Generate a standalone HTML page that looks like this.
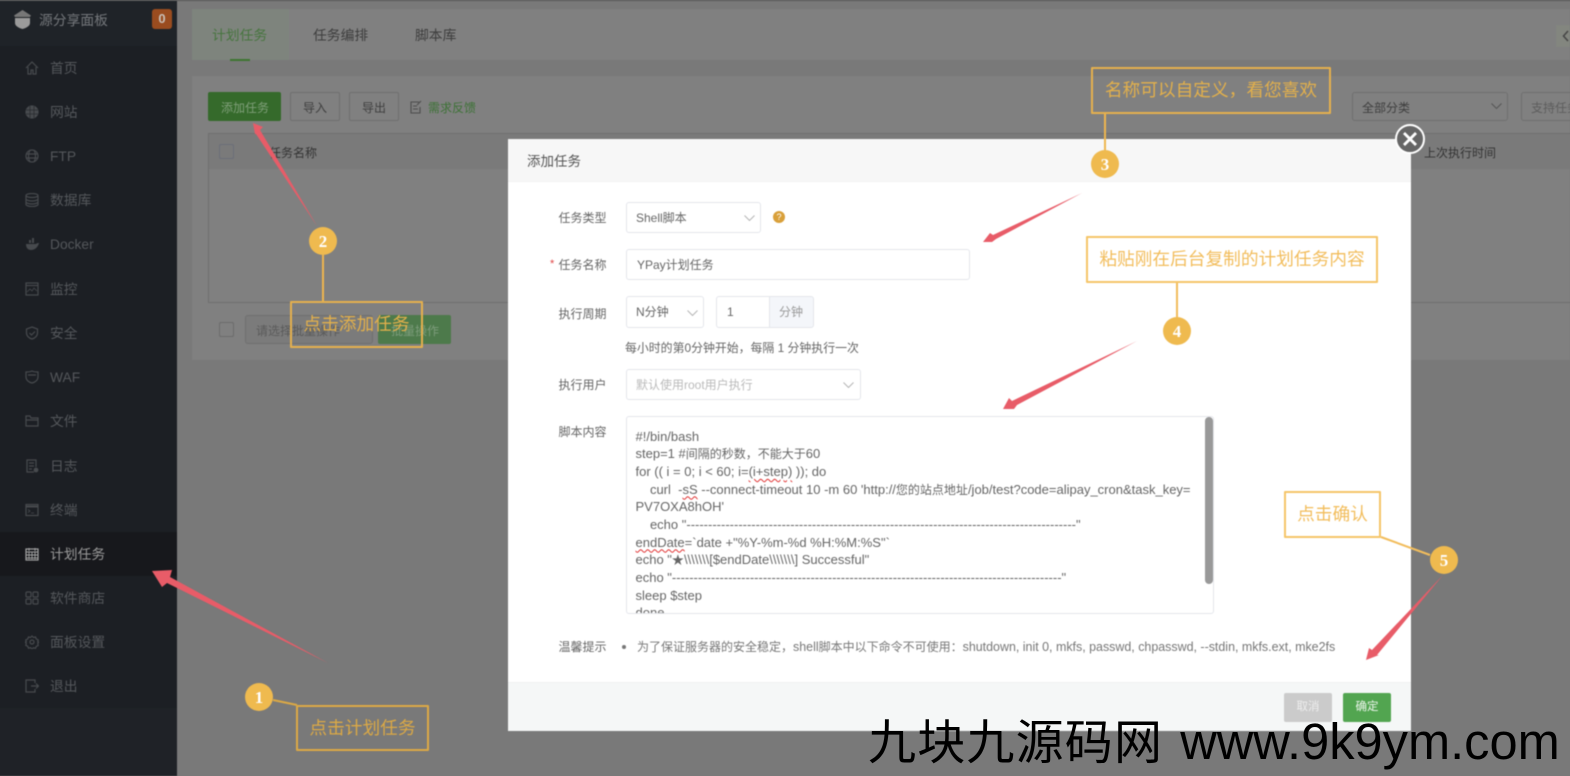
<!DOCTYPE html>
<html lang="zh-CN"><head><meta charset="utf-8"><title>计划任务</title>
<style>
html,body{margin:0;padding:0;width:1570px;height:776px;overflow:hidden;background:#797979}
body{font-family:"Liberation Sans","Noto Sans CJK SC",sans-serif;position:relative}
#page{position:absolute;left:0;top:0;width:1570px;height:776px;filter:blur(.55px);transform:translateX(1px)}
.a{position:absolute;box-sizing:border-box}
.t{position:absolute;white-space:pre;line-height:20px;height:20px;margin-top:-9px}
.nav{color:#54575b;font-size:13.8px;left:49px;margin-top:-8px}
.ic{position:absolute;left:24px;width:14px;height:14px;margin-top:-6px;fill:none;stroke:#474a4e;stroke-width:1.2}
.box{position:absolute;box-sizing:border-box;border:1px solid #e4e6eb;border-radius:3px;background:#fff}
.lb{color:#666;font-size:12px;left:557.5px}
.in{color:#666;font-size:12px}
.sl{position:absolute;width:11px;height:6px;fill:none;stroke:#b5b5b5;stroke-width:1}
.code{position:absolute;color:#666;font-size:13px;line-height:17.67px;white-space:pre}
.code i,.tip i{font-style:normal;font-size:12px;line-height:0}
.squig{text-decoration:underline wavy #e03030 1px;text-underline-offset:2px}
.co{position:absolute;box-sizing:border-box;border:2px solid #e5b04d;border-radius:1px;font-size:17.7px;text-align:center;color:#e3b04b}
.co2{border-color:#f5c568;color:#f2bd5c}
svg.ov{position:absolute;left:0;top:0}
.wm{position:absolute;left:868px;top:703px;height:70px;line-height:70px;white-space:nowrap;color:#000}
</style></head><body>
<div id="page">
<!-- sidebar -->
<div class="a" style="left:-2px;top:0;width:178px;height:776px;background:#1f2227"></div>
<div class="a" style="left:-2px;top:1px;width:178px;height:45px;background:#1f2328"></div>
<div class="a" style="left:-2px;top:46px;width:178px;height:662px;background:#1c1f24"></div>
<div class="a" style="left:-2px;top:532px;width:178px;height:44px;background:#17181c"></div>
<div class="a" style="left:-2px;top:0;width:1574px;height:1px;background:#555"></div>
<svg class="a" style="left:12px;top:9px" width="19" height="21" viewBox="0 0 19 21"><path d="M2 9h15v5c0 3-4 5-7.500 6C6 19 2 17 2 14z" fill="#9b9b9b"/><path d="M1 6.500 9.500 1 18 6.500 17 8H2z" fill="#777"/></svg>
<div class="t" style="left:38px;top:20px;color:#74777b;font-size:13.8px">源分享面板</div>
<div class="a" style="left:151px;top:9px;width:20px;height:20px;border-radius:3px;background:#9a4c1f;color:#c9c0b8;font-size:13px;font-weight:bold;text-align:center;line-height:20px">0</div>

<svg class="ic" style="top:67px" viewBox="0 0 14 14"><path d="M1 7 7 1l6 6M3 6v7h3V9h2v4h3V6"/></svg><div class="t nav" style="top:67px">首页</div>
<svg class="ic" style="top:111px" viewBox="0 0 14 14"><circle cx="7" cy="7" r="6" fill="#474a4e"/><path d="M1 5h12M1 9h12M5 1v12M9 1v12" stroke="#2a2c30" stroke-width=".8"/></svg><div class="t nav" style="top:111px">网站</div>
<svg class="ic" style="top:155px" viewBox="0 0 14 14"><circle cx="7" cy="7" r="6"/><path d="M1 5h12M1 9h12M5 1c-2 4-2 8 0 12M9 1c2 4 2 8 0 12"/></svg><div class="t nav" style="top:155px">FTP</div>
<svg class="ic" style="top:199px" viewBox="0 0 14 14"><ellipse cx="7" cy="2.500" rx="6" ry="2"/><path d="M1 2.500v9c0 1 3 2 6 2s6-1 6-2v-9M1 6c0 1 3 2 6 2s6-1 6-2M1 9c0 1 3 2 6 2s6-1 6-2"/></svg><div class="t nav" style="top:199px">数据库</div>
<svg class="ic" style="top:243px" viewBox="0 0 14 14"><path d="M1 7h10c1-1 2-1 3-1-1 4-4 7-8 7-3 0-5-2-5-6zM4 3h2v3H4zM7 1h2v5H7z" fill="#474a4e" stroke="none"/></svg><div class="t nav" style="top:243px">Docker</div>
<svg class="ic" style="top:288px" viewBox="0 0 14 14"><rect x="1" y="1" width="12" height="12"/><path d="M2 10l3-3 2 2 2-3 3 3" stroke-width=".8"/><path d="M1 3.500h12"/></svg><div class="t nav" style="top:288px">监控</div>
<svg class="ic" style="top:332px" viewBox="0 0 14 14"><path d="M7 1l5.500 2v4c0 3-3 5.500-5.500 6-2.500-.5-5.500-3-5.500-6V3zM4.500 7 6.500 9l3.500-3.500"/></svg><div class="t nav" style="top:332px">安全</div>
<svg class="ic" style="top:376px" viewBox="0 0 14 14"><path d="M7 1c2 1 4 1 6 1v5c0 3-3 5.500-6 6-3-.5-6-3-6-6V2c2 0 4 0 6-1zM3 5h8"/></svg><div class="t nav" style="top:376px">WAF</div>
<svg class="ic" style="top:420px" viewBox="0 0 14 14"><path d="M1 12V2h4l1 2h7v8zM1 6h12"/></svg><div class="t nav" style="top:420px">文件</div>
<svg class="ic" style="top:465px" viewBox="0 0 14 14"><path d="M11 8V1H2v12h7M4 4h5M4 7h5M4 10h3"/><circle cx="11" cy="11" r="1.800" fill="#474a4e"/></svg><div class="t nav" style="top:465px">日志</div>
<svg class="ic" style="top:509px" viewBox="0 0 14 14"><rect x="1" y="1.500" width="12" height="11"/><path d="M1 3.500h12" stroke-width="2"/><path d="M3 6.500l2 1.500-2 1.500M6 10h3" stroke-width=".8"/></svg><div class="t nav" style="top:509px">终端</div>
<svg class="ic" style="top:553px;stroke:#a3a3a3" viewBox="0 0 14 14"><rect x="1" y="2" width="12" height="11"/><path d="M1 5h12M1 8h12M1 11h12M4 1v3M10 1v3M4 5v7M7 5v7M10 5v7" stroke-width=".9"/></svg><div class="t nav" style="top:553px;color:#9a9a9a">计划任务</div>
<svg class="ic" style="top:597px" viewBox="0 0 14 14"><rect x="1" y="1" width="5" height="5" rx="1"/><rect x="8" y="1" width="5" height="5" rx="1"/><rect x="1" y="8" width="5" height="5" rx="1"/><rect x="8" y="8" width="5" height="5" rx="1"/></svg><div class="t nav" style="top:597px">软件商店</div>
<svg class="ic" style="top:641px" viewBox="0 0 14 14"><circle cx="7" cy="7" r="2"/><path d="M7 1l1.500 1.500 2-.5.8 2 1.900.8-.5 2L14 7l-1.300 1.500.5 2-1.900.8-.8 2-2-.5L7 14l-1.500-1.300-2 .5-.8-2-1.900-.8.5-2L0 7l1.300-.2-.5-2 1.900-.8.8-2 2 .5z"/></svg><div class="t nav" style="top:641px">面板设置</div>
<svg class="ic" style="top:685px" viewBox="0 0 14 14"><path d="M10 4V1H1v12h9v-3M6 7h7.500M11 4.500 13.500 7 11 9.500"/></svg><div class="t nav" style="top:685px">退出</div>

<!-- main bg -->
<div class="a" style="left:191px;top:9px;width:1378px;height:51px;background:#808080"></div>
<div class="a" style="left:191px;top:9px;width:97px;height:51px;background:#7e847d"></div>
<div class="t" style="left:211px;top:35px;color:#47753f;font-size:13.8px">计划任务</div>
<div class="t" style="left:312px;top:35px;color:#3d3d3d;font-size:13.8px">任务编排</div>
<div class="t" style="left:414px;top:35px;color:#3d3d3d;font-size:13.8px">脚本库</div>
<div class="a" style="left:229px;top:59px;width:20px;height:2px;background:#3d7530"></div>
<div class="a" style="left:1555px;top:25px;width:14px;height:22px;background:#83867f"></div>
<svg class="a" style="left:1561px;top:29px" width="8" height="14" viewBox="0 0 8 14"><path d="M6 2 1.500 7 6 12" fill="none" stroke="#454545" stroke-width="1.500"/></svg>

<div class="a" style="left:191px;top:76px;width:1378px;height:284px;background:#808080"></div>
<div class="a" style="left:207px;top:92px;width:73px;height:29px;background:#356a2b;border-radius:2px"></div>
<div class="t" style="left:220px;top:107px;color:#7f9f79;font-size:12px">添加任务</div>
<div class="a" style="left:289px;top:92px;width:50px;height:29px;border:1px solid #6f6f6f;border-radius:2px"></div>
<div class="t" style="left:302px;top:107px;color:#3e3e3e;font-size:12px">导入</div>
<div class="a" style="left:348px;top:92px;width:50px;height:29px;border:1px solid #6f6f6f;border-radius:2px"></div>
<div class="t" style="left:361px;top:107px;color:#3e3e3e;font-size:12px">导出</div>
<svg class="a" style="left:409px;top:100px" width="13" height="14" viewBox="0 0 13 14"><path d="M9 2H1v11h9V7M3 6h4M3 9h5M11 1 7 5" fill="none" stroke="#4d4d4d" stroke-width="1.100"/></svg>
<div class="t" style="left:427px;top:107px;color:#3d7236;font-size:12px">需求反馈</div>
<div class="a" style="left:1351px;top:92px;width:156px;height:29px;border:1px solid #6f6f6f;border-radius:3px"></div>
<div class="t" style="left:1361px;top:107px;color:#3e3e3e;font-size:12px">全部分类</div>
<svg class="sl" style="left:1490px;top:103px;stroke:#555" viewBox="0 0 11 6"><path d="M.5.500 5.500 5.500 10.500.500"/></svg>
<div class="a" style="left:1520px;top:92px;width:60px;height:29px;border:1px solid #6f6f6f;border-radius:3px"></div>
<div class="t" style="left:1530px;top:107px;color:#5d5d5d;font-size:12px">支持任务</div>

<div class="a" style="left:207px;top:133px;width:1363px;height:170px;border:1px solid #6f6f6f;border-right:0"></div>
<div class="a" style="left:208px;top:134px;width:1362px;height:35px;background:#7a7a7a"></div>
<div class="a" style="left:218px;top:144px;width:15px;height:15px;border:1px solid #6b6e78;border-radius:2px"></div>
<div class="t" style="left:268px;top:152px;color:#333;font-size:12px">任务名称</div>
<div class="t" style="left:1423px;top:152px;color:#333;font-size:12px">上次执行时间</div>
<div class="a" style="left:218px;top:322px;width:15px;height:15px;border:1px solid #6b6b6b;border-radius:2px"></div>
<div class="a" style="left:244px;top:315px;width:128px;height:29px;border:1px solid #6f6f6f;border-radius:3px;background:#7b7b7b"></div>
<div class="t" style="left:255px;top:330px;color:#5a5a5a;font-size:12px">请选择批量操作</div>
<div class="a" style="left:377px;top:315px;width:73px;height:29px;background:#4d7a4b;border-radius:2px"></div>
<div class="t" style="left:390px;top:330px;color:#7d9c7b;font-size:12px">批量操作</div>

<!-- modal -->
<div class="a" style="left:507px;top:139px;width:903px;height:592px;background:#fff;border-radius:2px 0 0 2px"></div>
<div class="a" style="left:507px;top:139px;width:903px;height:43px;background:#f7f7f7;border-bottom:1px solid #f2f2f2"></div>
<div class="t" style="left:526px;top:161px;color:#555;font-size:13.500px">添加任务</div>

<div class="t lb" style="top:217px">任务类型</div>
<div class="box" style="left:624.5px;top:202px;width:135px;height:31px"></div>
<div class="t in" style="left:635px;top:217px">Shell脚本</div>
<svg class="sl" style="left:743px;top:215px" viewBox="0 0 11 6"><path d="M.5.500 5.500 5.500 10.500.500"/></svg>
<div class="a" style="left:772px;top:211px;width:12px;height:12px;border-radius:50%;background:#d9a03a;color:#fff;font-size:9px;line-height:12px;text-align:center">?</div>

<div class="t" style="left:549px;top:263px;color:#e04040;font-size:11px">*</div>
<div class="t lb" style="top:264px">任务名称</div>
<div class="box" style="left:624.5px;top:249px;width:344px;height:31px"></div>
<div class="t in" style="left:636px;top:264px">YPay计划任务</div>

<div class="t lb" style="top:313px">执行周期</div>
<div class="box" style="left:624.5px;top:296px;width:78px;height:32px"></div>
<div class="t in" style="left:635px;top:311px">N分钟</div>
<svg class="sl" style="left:686px;top:310px" viewBox="0 0 11 6"><path d="M.5.500 5.500 5.500 10.500.500"/></svg>
<div class="box" style="left:715px;top:296px;width:54px;height:32px;border-radius:3px 0 0 3px"></div>
<div class="t in" style="left:726px;top:311px">1</div>
<div class="box" style="left:768px;top:296px;width:45px;height:32px;background:#f4f6fa;border-radius:0 3px 3px 0"></div>
<div class="t" style="left:778px;top:311px;color:#999;font-size:12px">分钟</div>
<div class="t" style="left:624px;top:347px;color:#666;font-size:11.9px">每小时的第0分钟开始，每隔 1 分钟执行一次</div>

<div class="t lb" style="top:384px">执行用户</div>
<div class="box" style="left:624.5px;top:369px;width:235px;height:31px"></div>
<div class="t" style="left:635px;top:384px;color:#bbb;font-size:12px">默认使用root用户执行</div>
<svg class="sl" style="left:842px;top:382px" viewBox="0 0 11 6"><path d="M.5.500 5.500 5.500 10.500.500"/></svg>

<div class="t lb" style="top:431px">脚本内容</div>
<div class="box" style="left:624.5px;top:416px;width:588px;height:198px"></div>
<div class="a" style="left:625px;top:417px;width:587px;height:196px;overflow:hidden"><div class="code" style="left:9.5px;top:10.5px">#!/bin/bash
step=1 #<i>间隔的秒数，不能大于</i>60
for (( i = 0; i &lt; 60; i=<span class="squig">(i+step)</span> )); do
    curl  -<span class="squig">sS</span> --connect-timeout 10 -m 60 'http://<i>您的站点地址</i>/job/test?code=alipay_cron&amp;task_key=
PV7OXA8hOH'
    echo "------------------------------------------------------------------------------------------"
<span class="squig">endDate</span>=`date +"%Y-%m-%d %H:%M:%S"`
echo "<i>★</i>\\\\\\\[$endDate\\\\\\\] Successful"
echo "------------------------------------------------------------------------------------------"
sleep $step
done</div></div>
<div class="a" style="left:1204px;top:417px;width:8px;height:167px;background:#999;border-radius:4px"></div>

<div class="t lb" style="top:646px">温馨提示</div>
<div class="a" style="left:621px;top:645px;width:4px;height:4px;border-radius:50%;background:#777"></div>
<div class="t tip" style="left:636px;top:646px;color:#777;font-size:12.45px"><i>为了保证服务器的安全稳定，</i>shell<i>脚本中以下命令不可使用：</i>shutdown, init 0, mkfs, passwd, chpasswd, --stdin, mkfs.ext, mke2fs</div>

<div class="a" style="left:507px;top:682px;width:903px;height:49px;background:#f5f7f7;border-top:1px solid #eff1f1"></div>
<div class="a" style="left:1283px;top:693px;width:48px;height:29px;background:#cbcbcb;border-radius:2px;color:#eee;font-size:11.500px;line-height:28px;text-align:center">取消</div>
<div class="a" style="left:1342px;top:693px;width:48px;height:29px;background:#52a550;border-radius:2px;color:#eef6ee;font-size:11.500px;line-height:28px;text-align:center">确定</div>

<!-- annotations -->
<svg class="ov" width="1570" height="776" viewBox="0 0 1570 776">
<g fill="#e85c68">
<polygon points="151,571 171,570 169,577 327,663 166,583 161,587"/>
<polygon points="252,123 262,127 259,130 316,226 255,134 254,134"/>
<polygon points="982,242 989,233 992,235 1081,193 995,239 991,242"/>
<polygon points="1002,409 1008,398 1011,401 1136,341 1016,405 1013,409"/>
<polygon points="1365,660 1368,648 1371,650 1442,575 1376,655 1378,655"/>
</g>
<g stroke="#eeb64f" stroke-width="2" fill="none">
<path d="M272 700 296 705" stroke="#dca945"/>
<path d="M322 255V302"/>
<path d="M1104 114V150"/>
<path d="M1176 283V317" stroke="#f2bd5c"/>
<path d="M1380 537 1429 555" stroke="#f2bd5c"/>
</g>
<g fill="#efba4f">
<circle cx="258" cy="697" r="14"/><circle cx="322" cy="241" r="14"/><circle cx="1104" cy="164" r="14"/><circle cx="1176" cy="331" r="14"/><circle cx="1443" cy="560" r="14"/>
</g>
<g fill="#fff" font-family="'Liberation Serif',serif" font-size="17" text-anchor="middle" font-weight="bold">
<text x="258" y="703">1</text><text x="322" y="247">2</text><text x="1104" y="170">3</text><text x="1176" y="337">4</text><text x="1443" y="566">5</text>
</g>
<circle cx="1409" cy="139" r="14" fill="#666" stroke="#fff" stroke-width="2"/>
<path d="M1403 133 1415 145M1415 133 1403 145" stroke="#fff" stroke-width="2.800"/>
</svg>
<div class="co" style="left:295px;top:705px;width:133px;height:46px;line-height:42px;color:#dca945;border-color:#dca945">点击计划任务</div>
<div class="co" style="left:289px;top:301px;width:133px;height:47px;line-height:43px">点击添加任务</div>
<div class="co" style="left:1090px;top:67px;width:240px;height:47px;line-height:43px">名称可以自定义，看您喜欢</div>
<div class="co co2" style="left:1085px;top:236px;width:292px;height:47px;line-height:43px">粘贴刚在后台复制的计划任务内容</div>
<div class="co co2" style="left:1283px;top:491px;width:97px;height:47px;line-height:43px">点击确认</div>
</div>
<!-- watermark -->
<div class="wm"><span style="font-size:48px;letter-spacing:1.2px;font-family:'Noto Sans CJK SC',sans-serif">九块九源码网</span><span style="font-size:50.6px;margin-left:17px">www.9k9ym.com</span></div>
</body></html>
